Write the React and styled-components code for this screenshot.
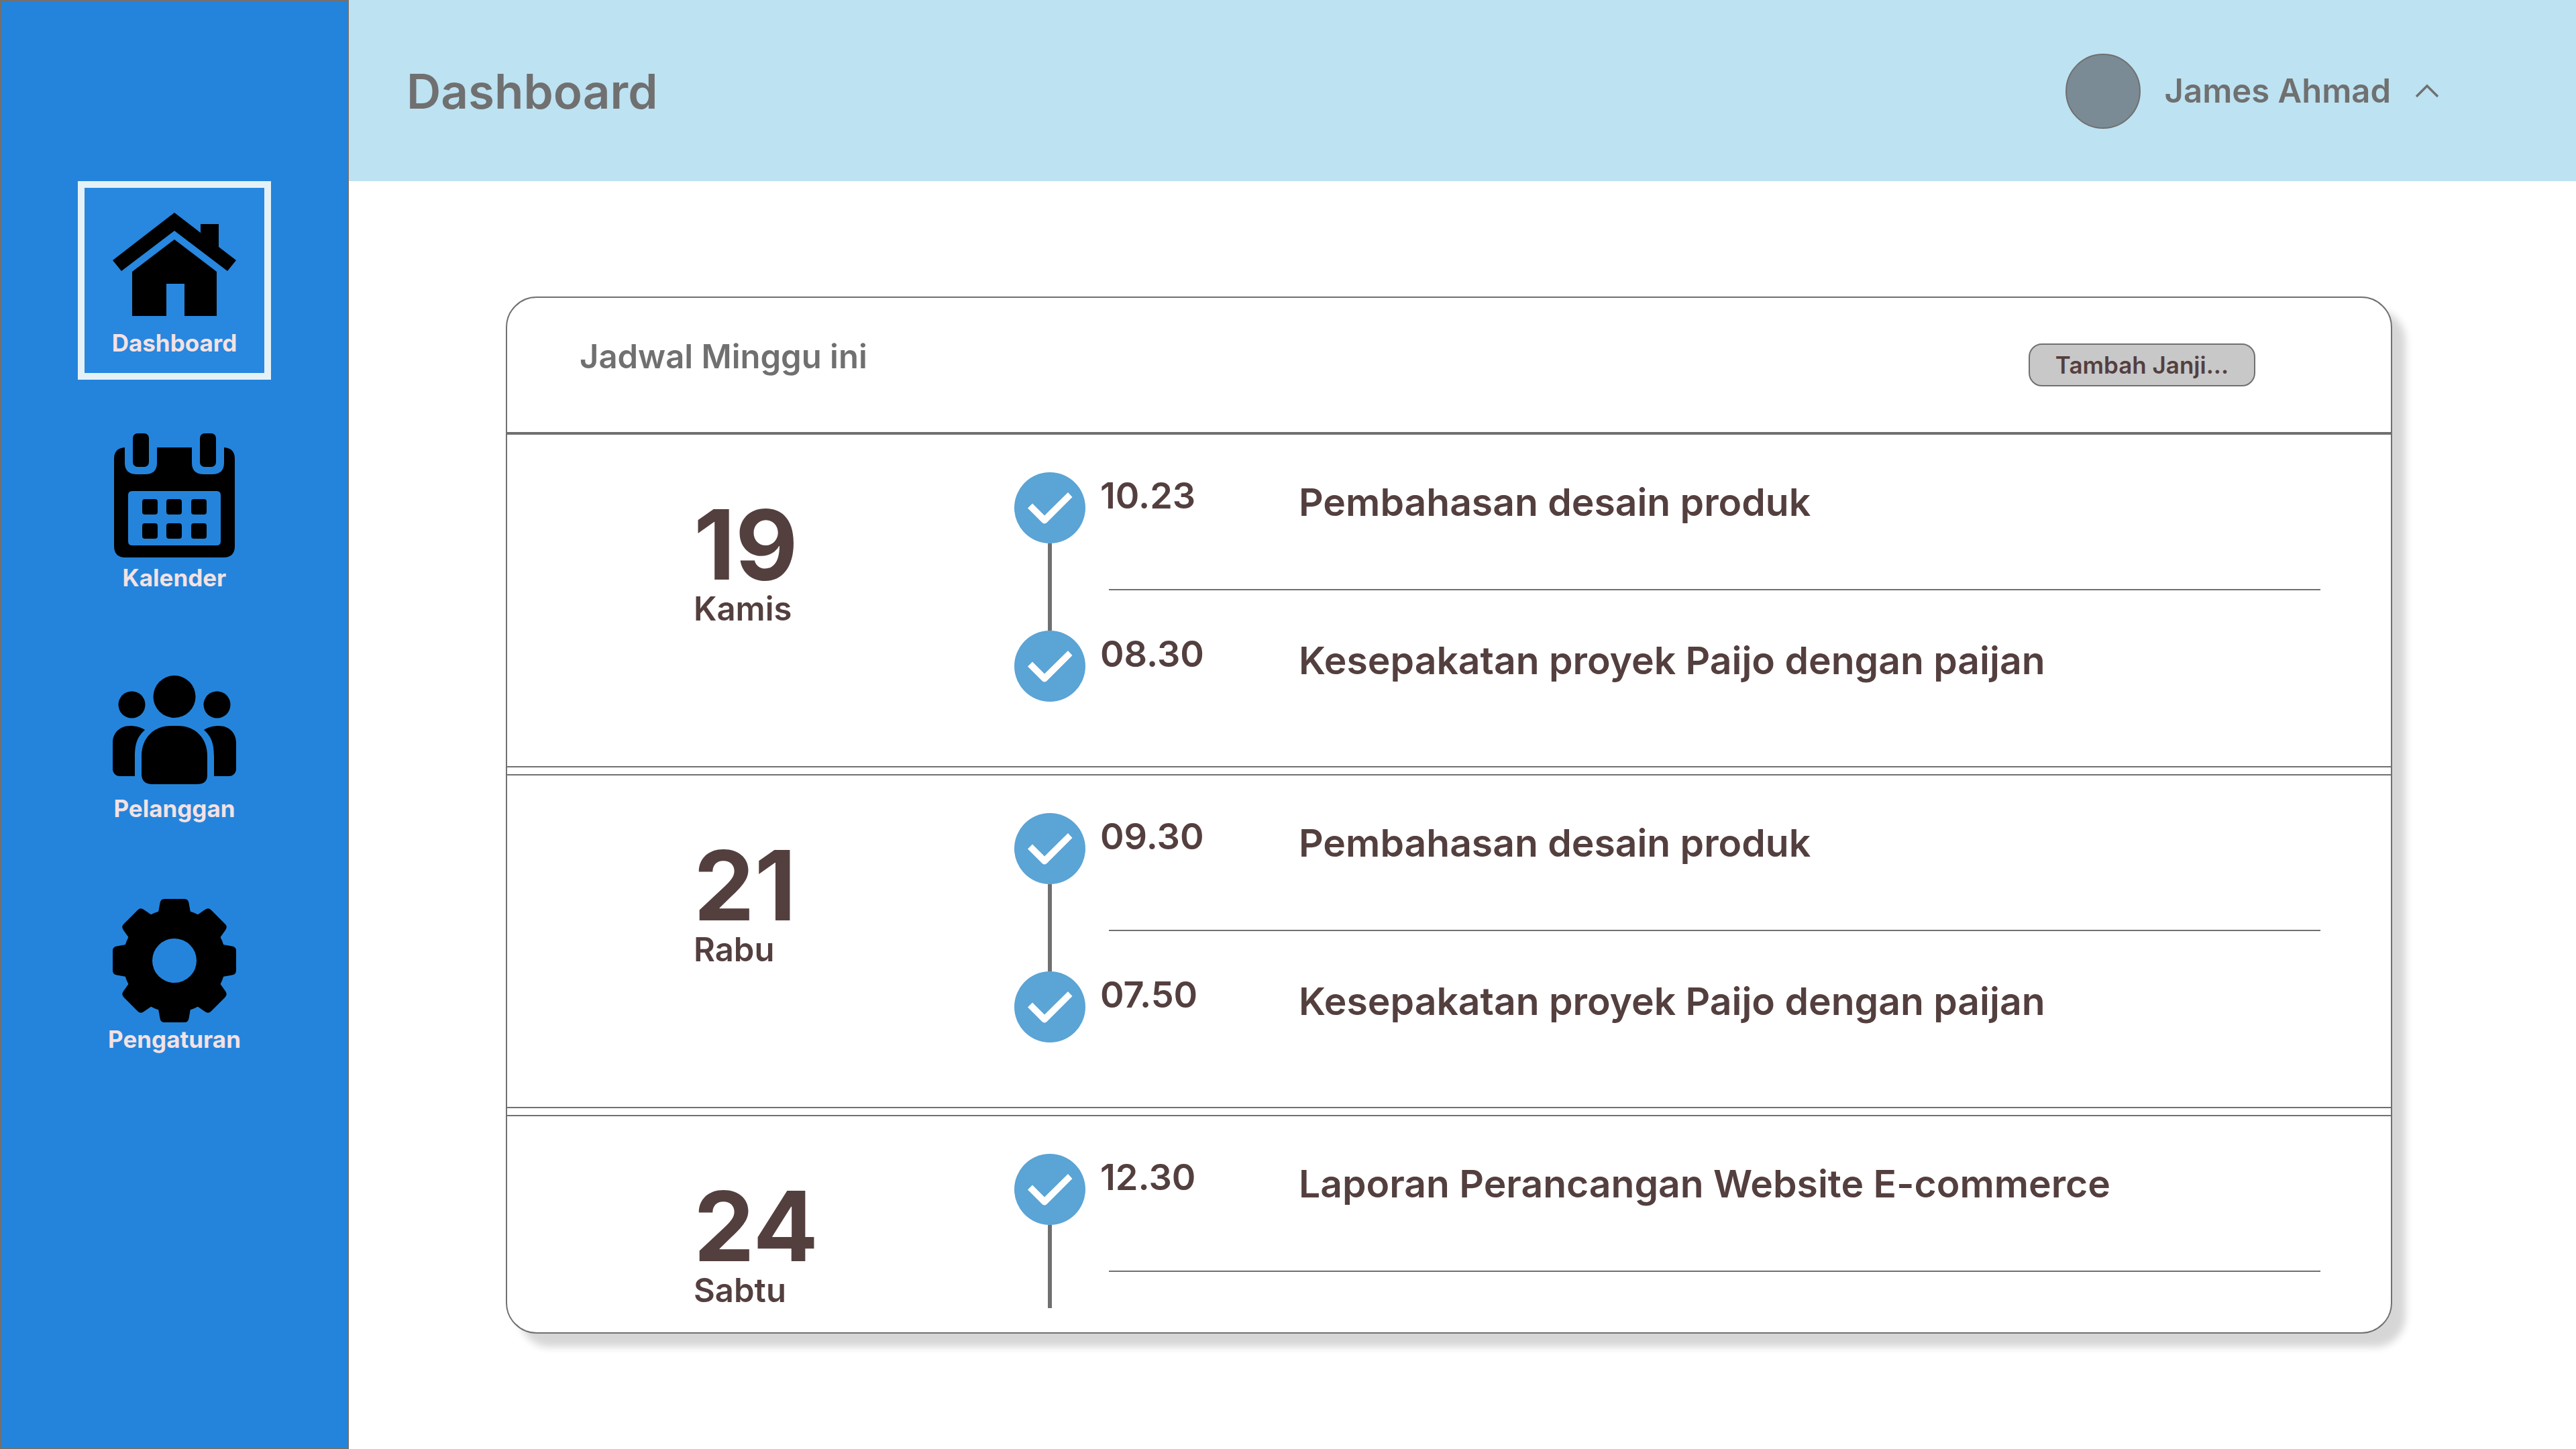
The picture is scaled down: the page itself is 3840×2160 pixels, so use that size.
import React from "react";
import styled, { createGlobalStyle } from "styled-components";

const color = {
  sidebar: "#2484db",
  active: "#2887de",
  activeBorder: "#e4f1f7",
  navText: "#f4e1e3",
  header: "#bde2f2",
  line: "#707070",
  ink: "#543f3f",
  button: "#c8c8c8",
  avatar: "#7a8b95",
  check: "#5aa4d6",
};

const GlobalStyle = createGlobalStyle`
  *, *::before, *::after { box-sizing: border-box; }
  body {
    margin: 0;
    background: #fff;
    color: ${color.ink};
    font-family: "Google Sans", "Product Sans", Inter, "Liberation Sans", sans-serif;
    font-weight: 600;
  }
  h1, h2, h3, p, ul, ol { margin: 0; padding: 0; font-weight: inherit; }
  button { font: inherit; cursor: pointer; }
`;

const Page = styled.div`
  display: flex;
  min-height: 100vh;
`;

const Sidebar = styled.aside`
  flex: none;
  width: 520px;
  padding: 268px 0 48px;
  background: ${color.sidebar};
  border: 2px solid ${color.line};
`;

const NavList = styled.ul`
  display: flex;
  flex-direction: column;
  align-items: center;
  gap: 48px;
  list-style: none;
`;

const NavLink = styled.a`
  display: flex;
  flex-direction: column;
  align-items: center;
  width: 288px;
  padding: 22px 0 20px;
  border: 10px solid ${(p) => (p.$active ? color.activeBorder : "transparent")};
  background: ${(p) => (p.$active ? color.active : "transparent")};
  color: ${color.navText};
  font-size: 35px;
  line-height: 50px;
  font-weight: 700;
  text-decoration: none;

  svg { display: block; fill: #000; }
`;

const Main = styled.div`
  flex: 1;
  min-width: 0;
`;

const TopBar = styled.header`
  display: flex;
  align-items: center;
  justify-content: space-between;
  height: 270px;
  padding: 2px 204px 0 86px;
  background: ${color.header};
  color: ${color.line};
`;

const PageTitle = styled.h1`
  font-size: 71px;
  line-height: 90px;
`;

const UserMenu = styled.button`
  display: flex;
  align-items: center;
  gap: 36px;
  padding: 0;
  border: 0;
  background: none;
  color: inherit;
  font-size: 49px;
  line-height: 60px;
`;

const Avatar = styled.span`
  width: 112px;
  height: 112px;
  border: 2px solid ${color.line};
  border-radius: 50%;
  background: ${color.avatar};
`;

const Content = styled.main`
  padding: 172px 274px 172px 234px;
`;

const Card = styled.section`
  padding-bottom: 36px;
  border: 2px solid ${color.line};
  border-radius: 46px;
  background: #fff;
  box-shadow: 20px 20px 12px rgba(0, 0, 0, 0.16);
`;

const CardHeader = styled.div`
  display: flex;
  align-items: flex-start;
  justify-content: space-between;
  padding: 68px 202px 68px 108px;
  border-bottom: 2px solid ${color.line};
`;

const CardTitle = styled.h2`
  color: ${color.line};
  font-size: 49px;
  line-height: 40px;
`;

const AddButton = styled.button`
  width: 338px;
  height: 64px;
  padding: 0;
  border: 2px solid ${color.line};
  border-radius: 20px;
  background: ${color.button};
  color: ${color.ink};
  font-size: 35px;
  line-height: 50px;
`;

const Schedule = styled.div`
  display: flex;
  flex-direction: column;
  gap: 10px;
`;

const Day = styled.article`
  display: flex;
  padding: 56px 0 96px;
  border: solid ${color.line};
  border-width: 2px 0;

  &:last-child {
    padding-bottom: 0;
    border-bottom: 0;
  }
`;

const DayLabel = styled.div`
  flex: none;
  width: 756px;
  padding: 36px 0 0 278px;
`;

const DayNumber = styled.p`
  font-size: 144px;
  line-height: 144px;
  font-weight: 700;
`;

const DayName = styled.h3`
  font-size: 49px;
  line-height: 48px;
`;

const EventList = styled.ol`
  flex: 1;
  min-width: 0;
  list-style: none;
`;

const Event = styled.li`
  display: flex;
  height: 236px;

  &:last-child {
    height: ${(p) => (p.$linked ? 230 : 106)}px;
  }
`;

const Track = styled.div`
  display: flex;
  flex: none;
  flex-direction: column;
  align-items: center;
  width: 106px;

  svg { display: block; flex: none; }
`;

const Connector = styled.span`
  flex: 1;
  width: 6px;
  background: ${color.line};
`;

const EventBody = styled.div`
  flex: 1;
  min-width: 0;
  padding: 0 105px 0 35px;
`;

const EventText = styled.div`
  display: grid;
  grid-template-columns: 296px 1fr;
  align-items: start;
  height: ${(p) => (p.$linked ? 174 : 106)}px;
  margin-left: -13px;
`;

const Time = styled.time`
  font-size: 54px;
  line-height: 70px;
`;

const EventTitle = styled.p`
  font-size: 57px;
  line-height: 90px;
`;

const Rule = styled.hr`
  height: 2px;
  margin: 0;
  border: 0;
  background: ${color.line};
`;

function HomeIcon() {
  return (
    <svg width="184" height="184" viewBox="0 -15 184 184" aria-hidden="true">
      <path d="M92 0 131 30V17H158V51L184 71 171 87 92 27 13 87 0 71Z" />
      <path d="M92 40 155 88V154H107V106H80V154H29V88Z" />
    </svg>
  );
}

function CalendarIcon() {
  const columns = [42, 78, 115];
  const rows = [98, 134];
  return (
    <svg width="180" height="190" viewBox="0 0 180 190" aria-hidden="true">
      <path
        fillRule="evenodd"
        d="M16 21V44Q16 61 34 61H46Q64 61 64 44V21H116V44Q116 61 134 61H146Q164 61 164 44V21Q180 22 180 38V168Q180 185 163 185H17Q0 185 0 168V38Q0 22 16 21ZM27 86Q21 86 21 92V161Q21 167 27 167H153Q159 167 159 161V92Q159 86 153 86Z"
      />
      <rect x="28" width="24" height="50" rx="7" />
      <rect x="128" width="24" height="50" rx="7" />
      {rows.map((y) =>
        columns.map((x) => <rect key={`${x}-${y}`} x={x} y={y} width="23" height="23" rx="4" />)
      )}
    </svg>
  );
}

function PeopleIcon() {
  const side =
    "M26 75C34 75 42 77 48 81C37 91 33 101 33 121V150H11C4 150 0 145 0 139V100C0 86 10 75 26 75Z";
  return (
    <svg width="184" height="184" viewBox="0 -11 184 184" aria-hidden="true">
      <circle cx="92" cy="31.5" r="31.5" />
      <circle cx="28.5" cy="43.5" r="20" />
      <circle cx="155.5" cy="43.5" r="20" />
      <path d="M87 75H97C123 75 141 93 141 120V148C141 158 136 162 125 162H59C49 162 43 157 43 147V120C43 93 61 75 87 75Z" />
      <path d={side} />
      <path d={side} transform="matrix(-1 0 0 1 184 0)" />
    </svg>
  );
}

function GearIcon() {
  const teeth = [0, 45, 90, 135, 180, 225, 270, 315];
  return (
    <svg width="184" height="184" viewBox="-92 -92 184 184" aria-hidden="true">
      <path
        fillRule="evenodd"
        d="M0-77A77 77 0 0 1 0 77A77 77 0 0 1 0-77ZM0-33A33 33 0 0 0 0 33A33 33 0 0 0 0-33Z"
      />
      {teeth.map((angle) => (
        <path
          key={angle}
          transform={`rotate(${angle})`}
          d="M-24-72-21.500-86Q-20.500-92-15-92H15Q20.500-92 21.500-86L24-72Z"
        />
      ))}
    </svg>
  );
}

function CheckIcon() {
  return (
    <svg width="106" height="106" viewBox="0 0 106 106" role="img" aria-label="Selesai">
      <circle cx="53" cy="53" r="53" fill={color.check} />
      <path fill="#fff" d="M20 53.500 27 46.500 45 64.500 80 30 86.500 37 48.500 75Q45 78 41.500 75Z" />
    </svg>
  );
}

function ChevronUp() {
  return (
    <svg width="36" height="22" viewBox="0 0 36 22" aria-hidden="true">
      <path d="M2 19 18 3 34 19" fill="none" stroke={color.line} strokeWidth="3.500" />
    </svg>
  );
}

const navItems = [
  { label: "Dashboard", Icon: HomeIcon, active: true },
  { label: "Kalender", Icon: CalendarIcon },
  { label: "Pelanggan", Icon: PeopleIcon },
  { label: "Pengaturan", Icon: GearIcon },
];

const days = [
  {
    number: 19,
    name: "Kamis",
    events: [
      { time: "10.23", title: "Pembahasan desain produk", linked: true },
      { time: "08.30", title: "Kesepakatan proyek Paijo dengan paijan" },
    ],
  },
  {
    number: 21,
    name: "Rabu",
    events: [
      { time: "09.30", title: "Pembahasan desain produk", linked: true },
      { time: "07.50", title: "Kesepakatan proyek Paijo dengan paijan" },
    ],
  },
  {
    number: 24,
    name: "Sabtu",
    events: [{ time: "12.30", title: "Laporan Perancangan Website E-commerce", linked: true }],
  },
];

export default function App() {
  return (
    <>
      <GlobalStyle />
      <Page>
        <Sidebar>
          <nav>
            <NavList>
              {navItems.map(({ label, Icon, active }) => (
                <li key={label}>
                  <NavLink
                    href={`#${label.toLowerCase()}`}
                    $active={active}
                    aria-current={active ? "page" : undefined}
                  >
                    <Icon />
                    {label}
                  </NavLink>
                </li>
              ))}
            </NavList>
          </nav>
        </Sidebar>
        <Main>
          <TopBar>
            <PageTitle>Dashboard</PageTitle>
            <UserMenu type="button">
              <Avatar />
              <span>James Ahmad</span>
              <ChevronUp />
            </UserMenu>
          </TopBar>
          <Content>
            <Card>
              <CardHeader>
                <CardTitle>Jadwal Minggu ini</CardTitle>
                <AddButton type="button">Tambah Janji...</AddButton>
              </CardHeader>
              <Schedule>
                {days.map((day) => (
                  <Day key={day.number}>
                    <DayLabel>
                      <DayNumber>{day.number}</DayNumber>
                      <DayName>{day.name}</DayName>
                    </DayLabel>
                    <EventList>
                      {day.events.map((event) => (
                        <Event key={event.time} $linked={event.linked}>
                          <Track>
                            <CheckIcon />
                            {event.linked && <Connector />}
                          </Track>
                          <EventBody>
                            <EventText $linked={event.linked}>
                              <Time>{event.time}</Time>
                              <EventTitle>{event.title}</EventTitle>
                            </EventText>
                            {event.linked && <Rule />}
                          </EventBody>
                        </Event>
                      ))}
                    </EventList>
                  </Day>
                ))}
              </Schedule>
            </Card>
          </Content>
        </Main>
      </Page>
    </>
  );
}
